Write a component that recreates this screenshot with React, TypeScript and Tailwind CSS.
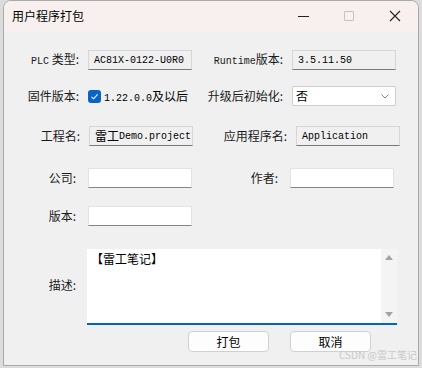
const cjk = "font-['Microsoft_YaHei','Noto_Sans_CJK_SC',sans-serif]"
const mono = "font-['Liberation_Mono','Noto_Sans_CJK_SC',monospace]"

function ReadOnlyBox({ children, className = "" }: { children: React.ReactNode; className?: string }) {
  return (
    <div
      className={`flex h-[20px] w-[104px] items-center border border-[#d6d6d6] border-b-[#7a7a7a] bg-[#f0f0f0] pl-[5px] text-[12px] text-black ${className}`}
    >
      {children}
    </div>
  )
}

function TextBox() {
  return <div className="h-[20px] w-[104px] border border-[#e3e3e3] border-b-[#858585] bg-white" />
}

function Label({ children, width }: { children: React.ReactNode; width: string }) {
  return (
    <div className={`${width} shrink-0 pr-[9px] text-right text-[12px] leading-none text-[#1a1a1a] ${cjk}`}>
      {children}
    </div>
  )
}

function Mono({ children }: { children: React.ReactNode }) {
  return <span className={`${mono} text-[10px]`}>{children}</span>
}

export default function App() {
  return (
    <div className="relative h-[368px] w-[422px] overflow-hidden bg-[#dcdcdc]">
      <div className="ml-[3px] flex h-[366px] w-[416px] flex-col overflow-hidden rounded-t-[8px] border border-[#a9a9a9] bg-[#f0f0f0]">
        {/* title bar */}
        <div className="flex h-[30px] shrink-0 items-center bg-[#f7f0ee] pl-[8px]">
          <span className={`text-[12px] text-black ${cjk}`}>用户程序打包</span>
          <div className="ml-auto flex h-full items-center">
            <div className="flex h-full w-[46px] items-center justify-center">
              <div className="h-px w-[11px] bg-[#222]" />
            </div>
            <div className="flex h-full w-[46px] items-center justify-center">
              <div className="size-[10px] rounded-[1px] border border-[#c4c4c4]" />
            </div>
            <div className="flex h-full w-[46px] items-center justify-center">
              <svg width="12" height="12" viewBox="0 0 12 12" stroke="#222" strokeWidth="1.1">
                <path d="M1 1 L11 11 M11 1 L1 11" />
              </svg>
            </div>
          </div>
        </div>

        {/* body */}
        <div className="flex flex-col">
          <div className="mt-[19px] flex items-center">
            <Label width="w-[84px]">
              <Mono>PLC</Mono> 类型:
            </Label>
            <ReadOnlyBox>
              <Mono>AC81X-0122-U0R0</Mono>
            </ReadOnlyBox>
            <Label width="w-[100px]">
              <Mono>Runtime</Mono>版本:
            </Label>
            <ReadOnlyBox>
              <Mono>3.5.11.50</Mono>
            </ReadOnlyBox>
          </div>

          <div className="mt-[16px] flex items-center">
            <Label width="w-[84px]">固件版本:</Label>
            <div className="flex h-[20px] w-[104px] items-center">
              <div className="flex size-[13px] items-center justify-center rounded-[3px] bg-[#0a64c2]">
                <svg width="9" height="9" viewBox="0 0 9 9" fill="none" stroke="white" strokeWidth="1.1">
                  <path d="M1.5 4.8 L3.6 6.8 L7.6 2.4" />
                </svg>
              </div>
              <span className={`ml-[3px] text-[12px] text-black ${cjk}`}>
                <Mono>1.22.0.0</Mono>及以后
              </span>
            </div>
            <Label width="w-[100px]">升级后初始化:</Label>
            <div className="flex h-[20px] w-[104px] items-center rounded-[2px] border border-[#cdcdcd] bg-white pl-[3px] pr-[6px]">
              <span className={`text-[12px] text-black ${cjk}`}>否</span>
              <svg className="ml-auto" width="8" height="5" viewBox="0 0 8 5" fill="none" stroke="#777" strokeWidth="0.9">
                <path d="M0.5 0.5 L4 4 L7.5 0.5" />
              </svg>
            </div>
          </div>

          <div className="mt-[20px] flex items-center">
            <Label width="w-[85px]">工程名:</Label>
            <ReadOnlyBox className={`w-[103px] pl-[3px] ${cjk}`}>
              雷工<Mono>Demo.project</Mono>
            </ReadOnlyBox>
            <Label width="w-[103px]">应用程序名:</Label>
            <ReadOnlyBox className="w-[103px]">
              <Mono>Application</Mono>
            </ReadOnlyBox>
          </div>

          <div className="mt-[22px] flex items-center">
            <Label width="w-[84px]">
              <span className="pr-[3px]">公司:</span>
            </Label>
            <TextBox />
            <Label width="w-[98px]">
              <span className="pr-[3px]">作者:</span>
            </Label>
            <TextBox />
          </div>

          <div className="mt-[18px] flex items-center">
            <Label width="w-[84px]">
              <span className="pr-[3px]">版本:</span>
            </Label>
            <TextBox />
          </div>

          <div className="mt-[23px] flex">
            <div className="w-[83px] shrink-0 pr-[9px] pt-[23px] text-right">
              <span className={`pr-[2px] text-[12px] text-[#1a1a1a] ${cjk}`}>描述:</span>
            </div>
            <div className="flex h-[76px] w-[310px] border-b-2 border-[#0067c0] bg-white">
              <div className={`flex-1 pl-[4px] pt-[1px] text-[12px] text-black ${cjk}`}>【雷工笔记】</div>
              <div className="flex w-[16px] flex-col items-center justify-between bg-[#f4f4f4] py-[6px]">
                <div className="h-0 w-0 border-x-[4px] border-b-[5px] border-x-transparent border-b-[#a3a3a3]" />
                <div className="h-0 w-0 border-x-[4px] border-t-[5px] border-x-transparent border-t-[#a3a3a3]" />
              </div>
            </div>
          </div>

          <div className="mt-[6px] flex pl-[184px]">
            <button
              type="button"
              className={`h-[21px] w-[81px] rounded-[4px] border border-[#d0d0d0] bg-[#fdfdfd] text-[12px] text-black ${cjk}`}
            >
              打包
            </button>
            <button
              type="button"
              className={`ml-[21px] h-[21px] w-[81px] rounded-[4px] border border-[#d0d0d0] bg-[#fdfdfd] text-[12px] text-black ${cjk}`}
            >
              取消
            </button>
          </div>
        </div>
      </div>

      <div className={`absolute left-[339px] top-[347px] whitespace-nowrap text-[10px] text-[#c9c9c9] ${cjk}`}>
        CSDN @雷工笔记
      </div>
    </div>
  )
}
